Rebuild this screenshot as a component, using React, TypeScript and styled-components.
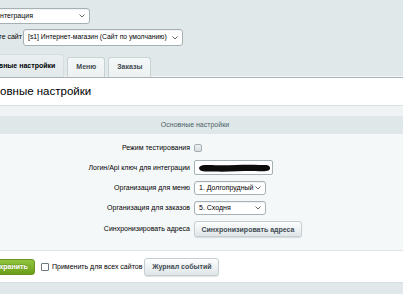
import React from "react";
import styled, { createGlobalStyle } from "styled-components";

const GlobalStyle = createGlobalStyle`
  html, body {
    margin: 0;
    padding: 0;
    background: #e1e8ea;
    overflow: hidden;
  }
  body {
    font-family: "Liberation Sans", Arial, sans-serif;
    font-size: 7px;
    line-height: 1.2;
    color: #000;
  }
`;

const Page = styled.div`
  width: 470px;
  margin-left: -40px;
  padding-top: 8px;
`;

const TopRow = styled.div`
  display: flex;
  align-items: center;
  padding-left: 30px;
  height: 16px;
`;

const SiteRow = styled.div`
  display: flex;
  align-items: center;
  margin-top: 5px;
  height: 17px;
`;

const SiteLabel = styled.span`
  width: 62px;
  text-align: right;
  margin-right: 1px;
`;

const SelectWrap = styled.div<{ $w: number; $h: number; $fs: number }>`
  position: relative;
  box-sizing: border-box;
  width: ${(p) => p.$w}px;
  height: ${(p) => p.$h}px;
  background: #fff;
  border: 1px solid #a6b1b5;
  border-radius: 3px;
  display: flex;
  align-items: center;
  padding: 0 12px 0 4px;
  font-size: ${(p) => p.$fs}px;
  white-space: nowrap;
  overflow: hidden;
  box-shadow: inset 0 1px 1px rgba(0, 0, 0, 0.06);
`;

const Chevron = styled.svg`
  position: absolute;
  right: 4px;
  top: 50%;
  margin-top: -2px;
  width: 6px;
  height: 4px;
`;

const Tabs = styled.div`
  display: flex;
  align-items: flex-end;
  gap: 3px;
  margin-top: 8px;
  padding-left: 12px;
  height: 23px;
`;

const Tab = styled.div<{ $active?: boolean }>`
  box-sizing: border-box;
  height: ${(p) => (p.$active ? 23 : 20)}px;
  padding: 0 8px;
  display: flex;
  align-items: center;
  font-weight: bold;
  color: ${(p) => (p.$active ? "#000" : "#3f4a50")};
  background: ${(p) =>
    p.$active ? "linear-gradient(#e9eef0, #e3e9eb)" : "linear-gradient(#f4f7f8, #edf1f2)"};
  border: 1px solid ${(p) => (p.$active ? "#d6dee1" : "#c9d2d5")};
  border-bottom: none;
  border-radius: 3px 3px 0 0;
`;

const Content = styled.div`
  border-top: 1px solid #aab4b8;
  box-shadow: 0 -1px 0 #f3f6f7;
`;

const Title = styled.div`
  background: #fff;
  height: 27px;
  display: flex;
  align-items: center;
  padding-left: 19px;
  font-size: 11.5px;
  border-bottom: 1px solid #d9e0e2;
`;

const Gap = styled.div`
  height: 10px;
  background: #eff3f4;
`;

const Heading = styled.div`
  height: 18px;
  background: #e0e7e9;
  display: flex;
  align-items: center;
  justify-content: center;
  color: #4b6267;
`;

const Form = styled.div`
  background: #f5f8f9;
  padding: 7px 0 10px;
  border-bottom: 1px solid #dfe5e7;
`;

const Row = styled.div<{ $extra?: number }>`
  display: grid;
  grid-template-columns: 234px 1fr;
  align-items: center;
  padding: 3px 0 ${(p) => 3 + (p.$extra ?? 0)}px;
`;

const Label = styled.div`
  text-align: right;
  padding-right: 4px;
`;

const Cell = styled.div`
  display: flex;
  align-items: center;
`;

const Check = styled.span`
  display: block;
  box-sizing: border-box;
  width: 8px;
  height: 8px;
  border: 1px solid #a3adb1;
  border-radius: 2px;
  background: linear-gradient(#eef2f3, #d6dde0);
`;

const InputWrap = styled.div`
  position: relative;
  box-sizing: border-box;
  width: 79px;
  height: 15px;
  background: #fff;
  border: 1px solid #a6b1b5;
  border-radius: 2px;
`;

const Redact = styled.svg`
  position: absolute;
  left: 3px;
  top: 2px;
  width: 73px;
  height: 10px;
`;

const GrayButton = styled.button<{ $w: number; $h: number }>`
  box-sizing: border-box;
  width: ${(p) => p.$w}px;
  height: ${(p) => p.$h}px;
  padding: 0;
  font-family: inherit;
  font-size: 7px;
  font-weight: bold;
  color: #3f4b54;
  white-space: nowrap;
  background: linear-gradient(#fdfefe, #dfe6e8);
  border: 1px solid #c5ced2;
  border-radius: 3px;
  box-shadow: 0 1px 1px rgba(0, 0, 0, 0.12);
`;

const Footer = styled.div`
  background: #fff;
  height: 31px;
  display: flex;
  align-items: center;
  padding-left: 23px;
  border-bottom: 1px solid #d6dde0;
`;

const SaveButton = styled.button`
  box-sizing: border-box;
  width: 52px;
  height: 16px;
  padding: 0;
  font-family: inherit;
  font-size: 7px;
  font-weight: bold;
  color: #fff;
  background: linear-gradient(#92c53f, #6b9d18);
  border: 1px solid #6a9421;
  border-radius: 3px;
  text-shadow: 0 -1px 0 rgba(0, 0, 0, 0.2);
`;

const ApplyAll = styled.label`
  display: flex;
  align-items: center;
  gap: 3px;
  margin-left: 6px;
  margin-right: 2px;
`;

const PlainCheck = styled.span`
  display: block;
  box-sizing: border-box;
  width: 8px;
  height: 8px;
  border: 1px solid #6f7a80;
  border-radius: 1px;
  background: #fff;
`;

const Bottom = styled.div`
  height: 11px;
  background: #e1e8ea;
`;

function Select({ text, w, h, fs = 7 }: { text: string; w: number; h: number; fs?: number }) {
  return (
    <SelectWrap $w={w} $h={h} $fs={fs}>
      {text}
      <Chevron viewBox="0 0 6 4">
        <path d="M0.5 0.5 L3 3 L5.5 0.5" fill="none" stroke="#555" strokeWidth="0.9" />
      </Chevron>
    </SelectWrap>
  );
}

export default function App() {
  return (
    <>
      <GlobalStyle />
      <Page>
        <TopRow>
          <Select text="Интеграция" w={100} h={16} />
        </TopRow>
        <SiteRow>
          <SiteLabel>Выберите сайт</SiteLabel>
          <Select text="[s1] Интернет-магазин (Сайт по умолчанию)" w={160} h={17} fs={6.8} />
        </SiteRow>
        <Tabs>
          <Tab $active>Основные настройки</Tab>
          <Tab>Меню</Tab>
          <Tab>Заказы</Tab>
        </Tabs>
        <Content>
          <Title>Основные настройки</Title>
          <Gap />
          <Heading>Основные настройки</Heading>
          <Form>
            <Row $extra={2}>
              <Label>Режим тестирования</Label>
              <Cell>
                <Check />
              </Cell>
            </Row>
            <Row>
              <Label>Логин/Api ключ для интеграции</Label>
              <Cell>
                <InputWrap>
                  <Redact viewBox="0 0 73 10">
                    <path
                      d="M1 5 C2 1 9 2 20 2.2 C33 2.5 48 1.2 61 2 C67 2.3 71 1 72 4.5 C72.5 8 69 8.5 61 8.2 C47 7.8 31 9 17 8.6 C8 8.4 1.5 9.5 1 5 Z"
                      fill="#0d0d0d"
                    />
                  </Redact>
                </InputWrap>
              </Cell>
            </Row>
            <Row>
              <Label>Организация для меню</Label>
              <Cell>
                <Select text="1. Долгопрудный" w={72} h={14} />
              </Cell>
            </Row>
            <Row>
              <Label>Организация для заказов</Label>
              <Cell>
                <Select text="5. Сходня" w={72} h={14} />
              </Cell>
            </Row>
            <Row>
              <Label>Синхронизировать адреса</Label>
              <Cell>
                <GrayButton $w={108} $h={16}>
                  Синхронизировать адреса
                </GrayButton>
              </Cell>
            </Row>
          </Form>
          <Footer>
            <SaveButton>Сохранить</SaveButton>
            <ApplyAll>
              <PlainCheck />
              Применить для всех сайтов
            </ApplyAll>
            <GrayButton $w={75} $h={18}>
              Журнал событий
            </GrayButton>
          </Footer>
          <Bottom />
        </Content>
      </Page>
    </>
  );
}
